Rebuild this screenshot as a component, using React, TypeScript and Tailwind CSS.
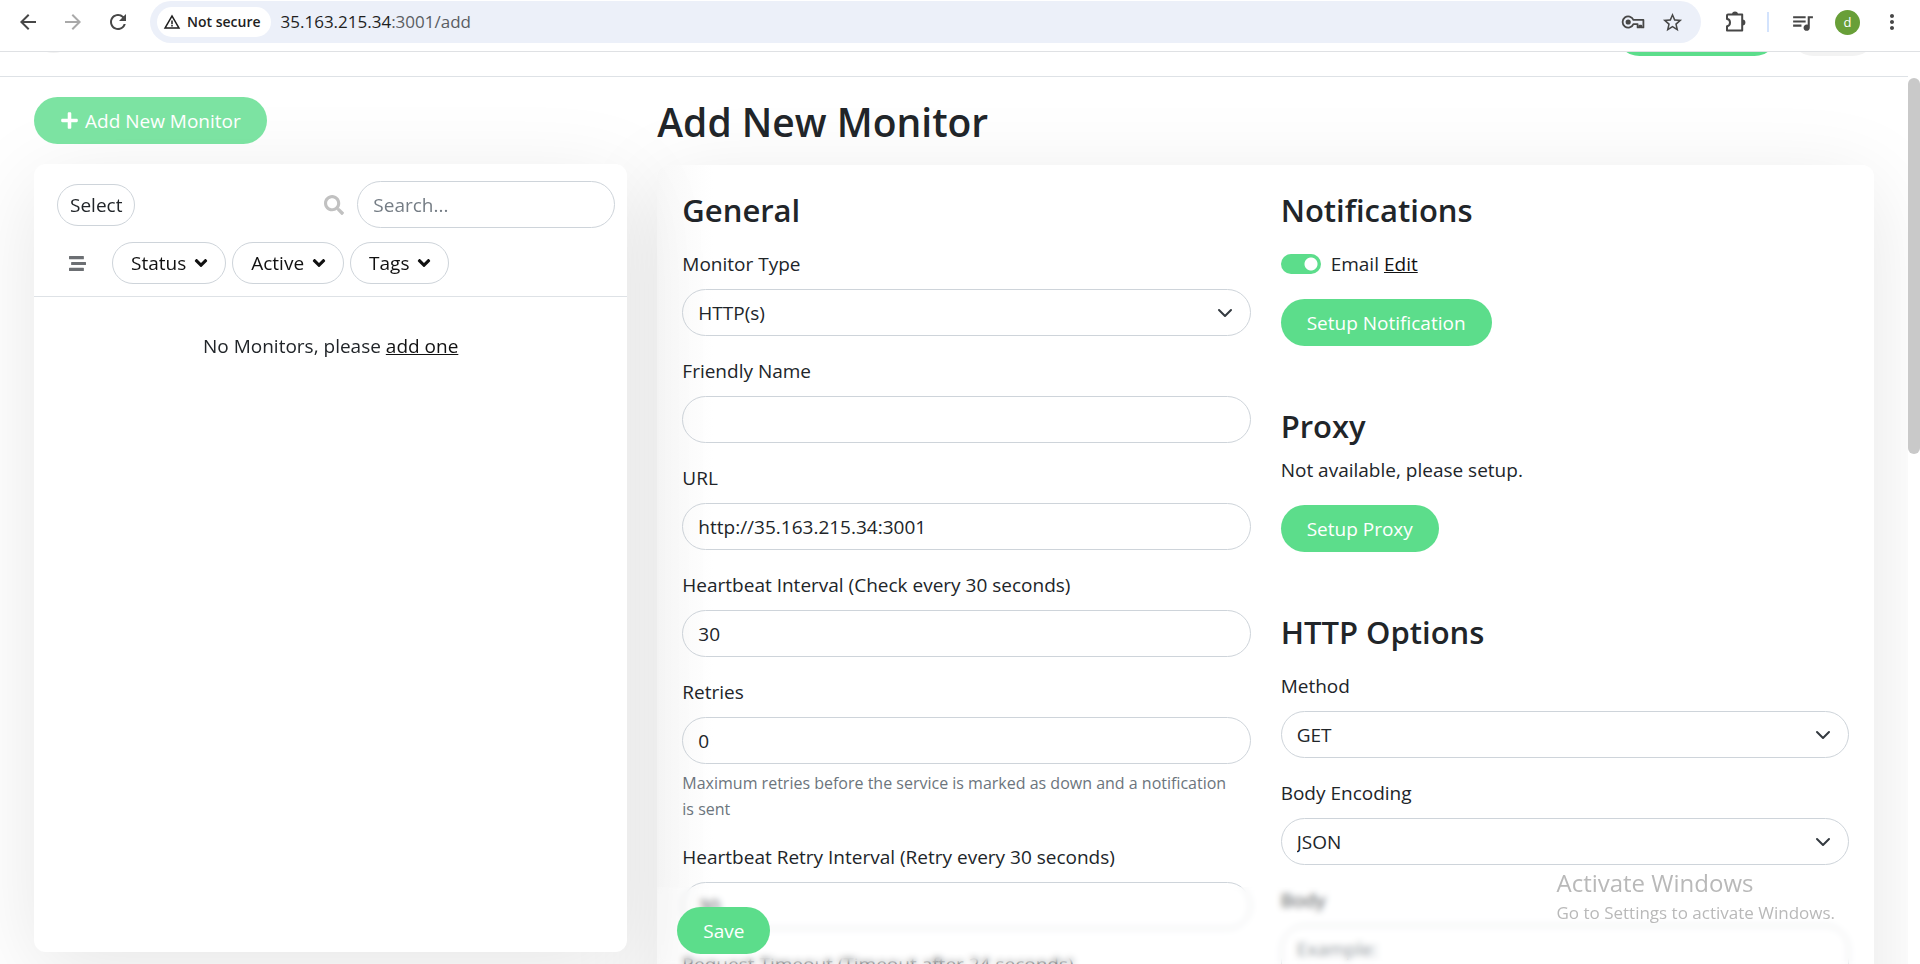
import type { ReactNode } from "react";
import {
  MdArrowBack,
  MdArrowForward,
  MdRefresh,
  MdWarningAmber,
  MdStarBorder,
  MdQueueMusic,
  MdMoreVert,
} from "react-icons/md";
import { FaAngleDown, FaPlus, FaSearch, FaStream } from "react-icons/fa";

const greenButton =
  "inline-flex h-[47px] items-center justify-center rounded-full bg-[#5cdd8b] px-[26px] text-[19px] text-white";
const field =
  "h-[47px] w-full rounded-full border border-[#ced4da] bg-transparent px-[15px] text-[19px] text-[#212529] outline-none";

function KeyIcon() {
  return (
    <svg width="24" height="16" viewBox="0 0 24 16" fill="none" stroke="#474747" strokeWidth="1.8">
      <path
        d="M12.4 5.9A5.6 5.6 0 1 0 12.4 10.1H16.6V13.4H18.6V11.6H20.2V13.4H22.4V5.9Z"
        strokeLinejoin="round"
      />
      <circle cx="7.2" cy="8" r="2.6" fill="#474747" stroke="none" />
    </svg>
  );
}

function PuzzleIcon() {
  return (
    <svg width="22" height="22" viewBox="0 0 22 22" fill="none" stroke="#474747" strokeWidth="2">
      <path
        d="M3 3.6H17.2V19.6H2V15.2C6 15 6 8.2 2 8V4.6Q2 3.6 3 3.6Z"
        strokeLinejoin="round"
      />
      <path d="M7 3.4a3 3 0 0 1 6 0ZM17.4 8.6a3 3 0 0 1 0 6Z" fill="#474747" stroke="none" />
    </svg>
  );
}

function BrowserBar() {
  return (
    <header className="flex h-[52px] shrink-0 items-start border-b border-[#dfe1e4] bg-white pt-px text-[#474747]">
      <div className="flex h-[42px] items-center gap-[21px] pl-4">
        <button aria-label="Back"><MdArrowBack size={24} /></button>
        <button aria-label="Forward" className="text-[#a9a9a9]"><MdArrowForward size={24} /></button>
        <button aria-label="Reload"><MdRefresh size={24} /></button>
      </div>
      <div className="ml-5 flex h-[42px] flex-1 items-center rounded-full bg-[#ecf0f9] pr-[17px] pl-[7px]">
        <button className="flex h-[30px] items-center gap-1.5 rounded-full bg-white pr-2.5 pl-1.5 text-[14px] font-semibold text-[#1f1f1f]">
          <MdWarningAmber size={18} />
          Not secure
        </button>
        <p className="flex-1 pl-2.5 text-[17px] text-[#1f1f1f]">
          35.163.215.34<span className="text-[#5a5d62]">:3001/add</span>
        </p>
        <button aria-label="Passwords"><KeyIcon /></button>
        <button aria-label="Bookmark" className="ml-4"><MdStarBorder size={23} /></button>
      </div>
      <div className="flex h-[42px] items-center pr-4">
        <button aria-label="Extensions" className="ml-6"><PuzzleIcon /></button>
        <span className="ml-5 h-5 w-0.5 bg-[#d3e3fd]" />
        <button aria-label="Media" className="ml-[21px]"><MdQueueMusic size={25} /></button>
        <button aria-label="Profile" className="ml-5 flex size-[25px] items-center justify-center rounded-full bg-[#689f38] text-[13px] text-white">
          d
        </button>
        <button aria-label="Menu" className="ml-5"><MdMoreVert size={24} /></button>
      </div>
    </header>
  );
}

function AppHeader() {
  return (
    <div className="flex h-[25px] shrink-0 items-end gap-3 overflow-hidden border-b border-[#dee2e6] bg-white pr-8 pb-5 pl-[30px]">
      <span className="mr-auto mb-[3px] h-[47px] w-[47px] rounded-full bg-[#f1f1f1]" />
      <span className="h-[47px] w-[162px] rounded-full bg-[#5cdd8b]" />
      <span className="h-[47px] w-[86px] rounded-full bg-[#f3f3f3]" />
    </div>
  );
}

function FilterButton({ children }: { children: ReactNode }) {
  return (
    <button className="flex h-[42px] items-center gap-[5px] rounded-full border border-[#ced4da] pr-3.5 pl-[18px] text-[19px] text-[#111]">
      {children}
      <FaAngleDown size={20} />
    </button>
  );
}

function Sidebar() {
  return (
    <aside className="sticky top-0 flex h-[calc(100vh-77px)] w-1/3 flex-col items-start px-[15px] pt-5 pb-3">
      <button disabled className={greenButton + " gap-1.5 opacity-80"}>
        <FaPlus size={19} />
        Add New Monitor
      </button>
      <section className="mt-5 w-full flex-1 rounded-[12px] bg-white shadow-[0_19px_88px_rgba(0,0,0,0.1)]">
        <div className="border-b border-[#dee2e6] pr-3 pb-3 pl-[23px]">
          <div className="flex items-center pt-[17px]">
            <button className="h-[42px] rounded-full border border-[#ced4da] px-3 text-[19px]">Select</button>
            <label htmlFor="search" className="mr-[13px] ml-auto text-[#c1c1c1]" aria-label="Search">
              <FaSearch size={20} />
            </label>
            <input id="search" placeholder="Search..." className={field + " max-w-[258px] placeholder:text-[#757d85]"} />
          </div>
          <div className="mt-3.5 flex items-center gap-1.5">
            <button aria-label="Toggle view" className="mr-5 ml-3 text-[#6c6f73]"><FaStream size={17} /></button>
            <FilterButton>Status</FilterButton>
            <FilterButton>Active</FilterButton>
            <FilterButton>Tags</FilterButton>
          </div>
        </div>
        <p className="pt-[34px] text-center">
          No Monitors, please <a href="#add" className="text-[#111] underline">add one</a>
        </p>
      </section>
    </aside>
  );
}

function TextField({ id, label, value, hint }: { id: string; label: string; value: string; hint?: string }) {
  return (
    <div className="mb-5">
      <label htmlFor={id} className="mb-2.5 block">{label}</label>
      <input id={id} defaultValue={value} className={field} />
      {hint && <p className="mt-1.5 pr-5 text-[16px] leading-[26px] text-[#6c757d]">{hint}</p>}
    </div>
  );
}

function SelectField({ id, label, value }: { id: string; label: string; value: string }) {
  return (
    <div className="mb-5">
      <label htmlFor={id} className="mb-2.5 block">{label}</label>
      <div className="grid items-center">
        <select id={id} className={field + " col-start-1 row-start-1 appearance-none"}>
          <option>{value}</option>
        </select>
        <svg
          className="pointer-events-none col-start-1 row-start-1 mr-[18px] justify-self-end"
          width="16"
          height="16"
          viewBox="0 0 16 16"
          fill="none"
          stroke="#343a40"
          strokeWidth="2"
          strokeLinecap="round"
          strokeLinejoin="round"
        >
          <path d="m2 5 6 6 6-6" />
        </svg>
      </div>
    </div>
  );
}

function Heading({ children }: { children: ReactNode }) {
  return <h2 className="text-[31px] leading-[40px] font-semibold">{children}</h2>;
}

function MonitorForm() {
  return (
    <main className="w-2/3 px-[15px] pt-5">
      <h1 className="mb-[18px] text-[39px] leading-[50px] font-semibold">Add New Monitor</h1>
      <form className="rounded-[12px] bg-[linear-gradient(to_right,#f9f9f9,#fff_56px)] shadow-[0_19px_88px_rgba(0,0,0,0.1)]">
        <div className="grid grid-cols-2 gap-[30px] px-[25px] pt-[25px]">
          <div>
            <div className="mb-[19px]"><Heading>General</Heading></div>
            <SelectField id="type" label="Monitor Type" value="HTTP(s)" />
            <TextField id="name" label="Friendly Name" value="" />
            <TextField id="url" label="URL" value="http://35.163.215.34:3001" />
            <TextField id="interval" label="Heartbeat Interval (Check every 30 seconds)" value="30" />
            <TextField
              id="retries"
              label="Retries"
              value="0"
              hint="Maximum retries before the service is marked as down and a notification is sent"
            />
            <TextField id="retry" label="Heartbeat Retry Interval (Retry every 30 seconds)" value="30" />
            <TextField id="timeout" label="Request Timeout (Timeout after 24 seconds)" value="24" />
          </div>
          <div>
            <div className="mb-[19px]"><Heading>Notifications</Heading></div>
            <div className="mb-5 flex items-center">
              <input
                id="email"
                type="checkbox"
                role="switch"
                defaultChecked
                className="h-5 w-10 appearance-none rounded-full bg-[#5cdd8b] bg-[radial-gradient(circle_at_30px_10px,#fff_6px,transparent_7px)]"
              />
              <label htmlFor="email" className="mr-[5px] ml-2.5">Email</label>
              <a href="#edit" className="text-[#111] underline">Edit</a>
            </div>
            <button type="button" className={greenButton}>Setup Notification</button>
            <div className="mt-[60px] mb-[9px]"><Heading>Proxy</Heading></div>
            <p className="mb-5">Not available, please setup.</p>
            <button type="button" className={greenButton}>Setup Proxy</button>
            <div className="mt-[60px] mb-[19px]"><Heading>HTTP Options</Heading></div>
            <SelectField id="method" label="Method" value="GET" />
            <SelectField id="encoding" label="Body Encoding" value="JSON" />
            <label htmlFor="body" className="mb-2.5 block">Body</label>
            <textarea
              id="body"
              placeholder="Example:"
              className="h-[200px] w-full resize-none rounded-[24px] border border-[#ced4da] px-[15px] py-2 placeholder:text-[#757d85]"
            />
          </div>
        </div>
        <div className="sticky bottom-0 bg-white/20 px-5 pt-5 pb-2.5 backdrop-blur-[3px]">
          <button type="submit" className={greenButton}>Save</button>
        </div>
      </form>
    </main>
  );
}

export default function App() {
  return (
    <div className="relative flex h-screen flex-col overflow-hidden bg-white font-['Open_Sans','Noto_Sans',sans-serif] text-[19px] leading-[30px] text-[#212529]">
      <BrowserBar />
      <div className="flex min-h-0 flex-1">
        <div className="flex min-w-0 flex-1 flex-col">
          <AppHeader />
          <div className="flex min-h-0 flex-1 items-start overflow-hidden px-[19px]">
            <Sidebar />
            <MonitorForm />
          </div>
        </div>
        <div className="w-3 pt-[26px]">
          <div className="h-[376px] rounded-full bg-[#c9c9c9]" />
        </div>
      </div>
      <div className="pointer-events-none absolute right-[85px] bottom-[37px] text-[#b9b9b9]">
        <p className="text-[24px] leading-[32px]">Activate Windows</p>
        <p className="text-[17px] leading-[28px]">Go to Settings to activate Windows.</p>
      </div>
    </div>
  );
}
